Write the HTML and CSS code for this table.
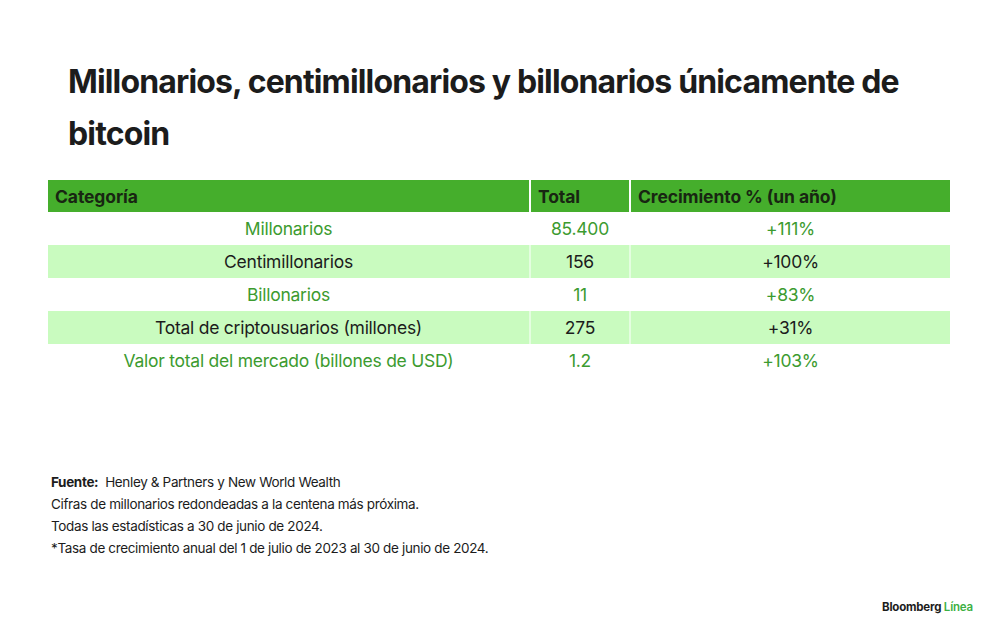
FILE: index.html
```html
<!DOCTYPE html>
<html lang="es">
<head>
<meta charset="utf-8">
<link rel="stylesheet" href="styles.css">
</head>
<body>
<div class="page">
  <h1 class="title">Millonarios, centimillonarios y billonarios únicamente de bitcoin</h1>
  <table class="data">
    <thead>
      <tr><th class="c1">Categoría</th><th class="c2">Total</th><th class="c3">Crecimiento % (un año)</th></tr>
    </thead>
    <tbody>
      <tr class="g"><td>Millonarios</td><td>85.400</td><td>+111%</td></tr>
      <tr class="l"><td>Centimillonarios</td><td>156</td><td>+100%</td></tr>
      <tr class="g"><td>Billonarios</td><td>11</td><td>+83%</td></tr>
      <tr class="l"><td>Total de criptousuarios (millones)</td><td>275</td><td>+31%</td></tr>
      <tr class="g"><td>Valor total del mercado (billones de USD)</td><td>1.2</td><td>+103%</td></tr>
    </tbody>
  </table>
  <div class="notes">
    <p><b>Fuente:</b>&nbsp; Henley &amp; Partners y New World Wealth</p>
    <p>Cifras de millonarios redondeadas a la centena más próxima.</p>
    <p>Todas las estadísticas a 30 de junio de 2024.</p>
    <p>*Tasa de crecimiento anual del 1 de julio de 2023 al 30 de junio de 2024.</p>
  </div>
  <div class="brand"><span class="bb">Bloomberg</span> <span class="ln">Línea</span></div>
</div>
</body>
</html>
```
FILE: styles.css
```css
html, body { margin: 0; padding: 0; background: #fff; }
body { font-family: Inter, "Liberation Sans", sans-serif; color: #1c1c1c; }
.page { width: 1000px; height: 637px; position: relative; box-sizing: border-box; padding: 56px 0 0 0; }
.title {
  margin: 0 0 0 68px; width: 880px;
  font-size: 32px; font-weight: 700; line-height: 52px; letter-spacing: -0.85px;
  color: #1c1c1c;
}
.data {
  margin: 20px 0 0 48px; width: 902px;
  border-collapse: collapse; table-layout: fixed;
  font-size: 17.5px; letter-spacing: -0.25px;
}
.data th, .data td { padding: 0; height: 33px; }
.data th { background: #45ae2c; text-align: left; font-weight: 700; padding-left: 7px; height: 32px; color: #182612; letter-spacing: -0.1px; }
.data th + th, .data td + td { border-left: 2px solid #fff; }
.data .c1 { width: 474px; }
.data .c2 { width: 91px; }
.data td { text-align: center; font-weight: 400; }
.data tr.g td { color: #3c9b2f; background: #fff; }
.data tr.l td { color: #1c1c1c; background: #c9fbbf; }
.data tr.l td + td { border-left-color: #e4fde0; }
.notes { margin: 94px 0 0 51px; font-size: 13.5px; letter-spacing: -0.35px; line-height: 22px; color: #1c1c1c; }
.notes p { margin: 0; }
.notes b { font-weight: 700; }
.brand { position: absolute; left: 882px; top: 600px; font-size: 11.5px; font-weight: 700; letter-spacing: -0.2px; }
.brand .bb { color: #1c1c1c; }
.brand .ln { color: #3cb043; font-weight: 600; }
```
